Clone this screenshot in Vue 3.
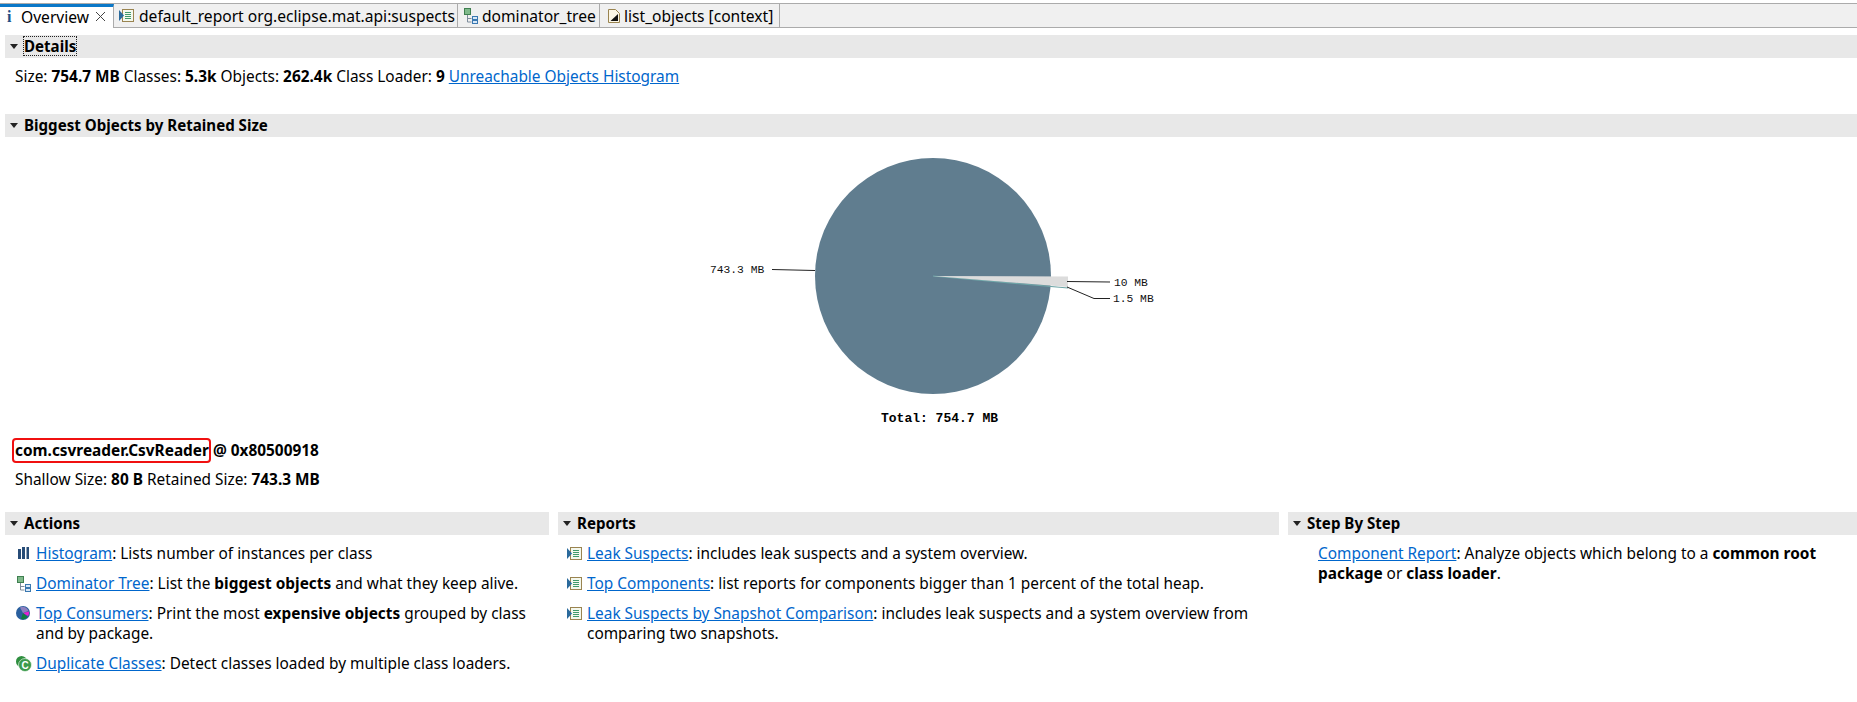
<script setup>
const tabs = [
  { name: 'default_report org.eclipse.mat.api:suspects', icon: 'report', w: 344, pad: 5, gap: 4 },
  { name: 'dominator_tree', icon: 'tree', w: 142, pad: 5, gap: 3 },
  { name: 'list_objects [context]', icon: 'file', w: 180, pad: 6, gap: 2 },
]
const reports = [
  ['Leak Suspects', ': includes leak suspects and a system overview.'],
  ['Top Components', ': list reports for components bigger than 1 percent of the total heap.'],
  ['Leak Suspects by Snapshot Comparison', ': includes leak suspects and a system overview from comparing two snapshots.'],
]
</script>

<template>
  <div class="page">
    <div class="tabbar">
      <div class="tab active">
        <span class="info">i</span>
        <span>Overview</span>
        <svg class="close" width="11" height="11" viewBox="0 0 11 11"><path d="M1 1l9 9M10 1l-9 9" stroke="#444" fill="none" stroke-width="1"/></svg>
      </div>
      <div v-for="t in tabs" :key="t.name" class="tab" :style="{ width: t.w + 'px', paddingLeft: t.pad + 'px', gap: t.gap + 'px' }">
        <svg v-if="t.icon === 'report'" class="ic" width="16" height="16" viewBox="0 0 16 16">
          <rect x="3.500" y="1.500" width="11" height="12" fill="#f4f8ee" stroke="#9a8450"/>
          <path d="M6 4.500h6M6 6.500h6M6 8.500h6M6 10.500h6" stroke="#3f9a6a"/>
          <path d="M0 2l5 5.500L0 13z" fill="#2a6a9c"/>
        </svg>
        <svg v-else-if="t.icon === 'tree'" class="ic" width="16" height="16" viewBox="0 0 16 16">
          <rect x="1.500" y="0.500" width="6" height="6" fill="#7fb98a" stroke="#3f7f50"/>
          <path d="M4.500 7v7h4M4.500 10.500h4" stroke="#7d8c9c" fill="none"/>
          <rect x="9.500" y="8.500" width="5" height="3" fill="#d8e8f8" stroke="#3a78b0"/>
          <rect x="9.500" y="12.500" width="5" height="3" fill="#d8e8f8" stroke="#3a78b0"/>
        </svg>
        <svg v-else class="ic" width="16" height="16" viewBox="0 0 16 16">
          <path d="M2.500 1.500h7l4 4v9h-11z" fill="#fbf6e6" stroke="#9a8450"/>
          <path d="M4.500 13L12 13V6z" fill="#111"/>
        </svg>
        <span>{{ t.name }}</span>
      </div>
    </div>

    <section class="block details">
      <header class="head"><i class="tri"></i><span class="focus">Details</span></header>
      <p class="line">Size: <b>754.7 MB</b> Classes: <b>5.3k</b> Objects: <b>262.4k</b> Class Loader: <b>9</b> <a>Unreachable Objects Histogram</a></p>
    </section>

    <section class="block biggest">
      <header class="head"><i class="tri"></i><span>Biggest Objects by Retained Size</span></header>
      <div class="chart">
        <svg width="500" height="293" viewBox="680 137 500 293">
          <circle cx="933" cy="276" r="118" fill="#607d8f"/>
          <path d="M933 276L1068 288" stroke="#6fa6a8" stroke-width="1.200"/>
          <polygon points="933,276 1068,276.500 1068,287" fill="#dcdcdc"/>
          <path d="M772 269.500L815 270.500M1067 281.500L1110 282M1067 287L1094 298.500H1110" stroke="#222" fill="none"/>
          <text x="710" y="273" class="lbl">743.3 MB</text>
          <text x="1114" y="286" class="lbl">10 MB</text>
          <text x="1113" y="302" class="lbl">1.5 MB</text>
          <text x="881" y="422" class="total">Total: 754.7 MB</text>
        </svg>
      </div>
      <div class="object">
        <p class="line obj"><span class="mark"><b>com.csvreader.CsvReader</b></span> <b>@ 0x80500918</b></p>
        <p class="line size">Shallow Size: <b>80 B</b> Retained Size: <b>743.3 MB</b></p>
      </div>
    </section>

    <div class="columns">
      <section>
        <header class="head"><i class="tri"></i><span>Actions</span></header>
        <ul class="list act">
          <li><svg width="16" height="16" viewBox="0 0 16 16"><path d="M2 3h3v10H2zM6 1h3v12H6zM10.500 1h2.500v12h-2.500z" fill="#274c77"/></svg><div><a>Histogram</a>: Lists number of instances per class</div></li>
          <li><svg width="16" height="16" viewBox="0 0 16 16"><rect x="1.500" y="0.500" width="6" height="6" fill="#7fb98a" stroke="#3f7f50"/><path d="M4.500 7v7h4M4.500 10.500h4" stroke="#7d8c9c" fill="none"/><rect x="9.500" y="8.500" width="5" height="3" fill="#d8e8f8" stroke="#3a78b0"/><rect x="9.500" y="12.500" width="5" height="3" fill="#d8e8f8" stroke="#3a78b0"/></svg><div><a>Dominator Tree</a>: List the <b>biggest objects</b> and what they keep alive.</div></li>
          <li><svg width="16" height="16" viewBox="0 0 16 16"><circle cx="7" cy="7" r="7" fill="#2a5f9e"/><path d="M7 7L4 1.500A6 6 0 0 1 12.500 5z" fill="#8d7fc0"/><path d="M7 7l6-1.500A6.500 6.500 0 0 1 12 10z" fill="#e820d0"/><path d="M7 7l4.500 4A6 6 0 0 1 5 13z" fill="#0f7f3f"/></svg><div><a>Top Consumers</a>: Print the most <b>expensive objects</b> grouped by class and by package.</div></li>
          <li><svg width="16" height="16" viewBox="0 0 16 16"><circle cx="5.500" cy="5.500" r="5.500" fill="#2f8f3f"/><circle cx="9" cy="9" r="6.500" fill="#3c9a4c" stroke="#fff" stroke-width="0.600"/><text x="9" y="12.500" class="c">C</text></svg><div><a>Duplicate Classes</a>: Detect classes loaded by multiple class loaders.</div></li>
        </ul>
      </section>
      <section>
        <header class="head"><i class="tri"></i><span>Reports</span></header>
        <ul class="list rep">
          <li v-for="r in reports" :key="r[0]">
            <svg width="16" height="16" viewBox="0 0 16 16"><rect x="3.500" y="1.500" width="11" height="12" fill="#f4f8ee" stroke="#9a8450"/><path d="M6 4.500h6M6 6.500h6M6 8.500h6M6 10.500h6" stroke="#3f9a6a"/><path d="M0 2l5 5.500L0 13z" fill="#2a6a9c"/></svg>
            <div><a>{{ r[0] }}</a>{{ r[1] }}</div>
          </li>
        </ul>
      </section>
      <section>
        <header class="head"><i class="tri"></i><span>Step By Step</span></header>
        <ul class="list step">
          <li><div><a>Component Report</a>: Analyze objects which belong to a <b>common root package</b> or <b>class loader</b>.</div></li>
        </ul>
      </section>
    </div>
  </div>
</template>

<style>
html, body { margin: 0; background: #fff; }
</style>

<style scoped>
.page {
  width: 1857px;
  height: 702px;
  overflow: hidden;
  background: #fff;
  color: #000;
  font-family: "Noto Sans", "Open Sans", sans-serif;
  font-size: 15.400px;
  line-height: 20px;
  padding-top: 0.02px;
  box-sizing: border-box;
}
p { margin: 0; }
b { font-weight: 700; }
a { color: #0066cc; text-decoration: underline; }
.tabbar {
  display: flex;
  height: 23px;
  margin-top: 3px;
  background: #f0f0f0;
  border-top: 1px solid #ababab;
  border-bottom: 1px solid #ababab;
  font-size: 15.600px;
}
.tab {
  display: flex;
  align-items: center;
  box-sizing: border-box;
  border-right: 1px solid #ababab;
  white-space: nowrap;
  overflow: hidden;
}
.tab.active {
  width: 114px;
  height: 24px;
  background: #fff;
  border-top: 3px solid #0a78c8;
  padding-left: 7px;
  padding-bottom: 2px;
}
.info { width: 14px; color: #1d4f86; font-family: "Liberation Serif", serif; font-weight: 700; font-size: 16px; }
.close { margin-left: 6px; flex: none; }
.ic { flex: none; }

.head {
  display: flex;
  align-items: center;
  height: 23px;
  background: #e8e8e8;
  font-weight: 700;
  font-size: 15.100px;
  padding: 0 0 2px 5px;
  gap: 6px;
  box-sizing: border-box;
}
.tri {
  width: 0;
  height: 0;
  margin-top: 2px;
  border-left: 4px solid transparent;
  border-right: 4px solid transparent;
  border-top: 5px solid #222;
}
.focus { outline: 1px dotted #222; line-height: 18px; }
.block { margin-left: 5px; }
.details { margin-top: 7px; }
.line { padding: 9px 0 0 10px; }
.biggest { margin-top: 27px; }
.chart { margin-left: -5px; padding-left: 680px; height: 293px; }
.chart svg { display: block; }
.lbl { font-family: "Liberation Mono", monospace; font-size: 11.300px; fill: #111; }
.total { font-family: "Liberation Mono", monospace; font-size: 13px; font-weight: 700; fill: #000; }
.c { font-family: "Liberation Sans", sans-serif; font-size: 10px; font-weight: 700; fill: #fff; text-anchor: middle; }
.object { margin-top: 11px; }
.obj { padding-top: 0; }
.mark { outline: 2px solid #f01010; border-radius: 2px; padding: 0 0 0 1px; margin-left: -1px; }
.size { padding-top: 9px; }
.columns {
  display: grid;
  grid-template-columns: 544px 721px 570px;
  gap: 9px;
  margin: 22px 0 0 5px;
}
.list { list-style: none; margin: 0; padding: 9px 0 0 0; }
.list li { display: flex; gap: 4px; margin-bottom: 10px; }
.list li svg { flex: none; margin-top: 2px; }
.act { padding-left: 11px; }
.rep { padding-left: 9px; }
.step { padding-left: 30px; }
</style>
